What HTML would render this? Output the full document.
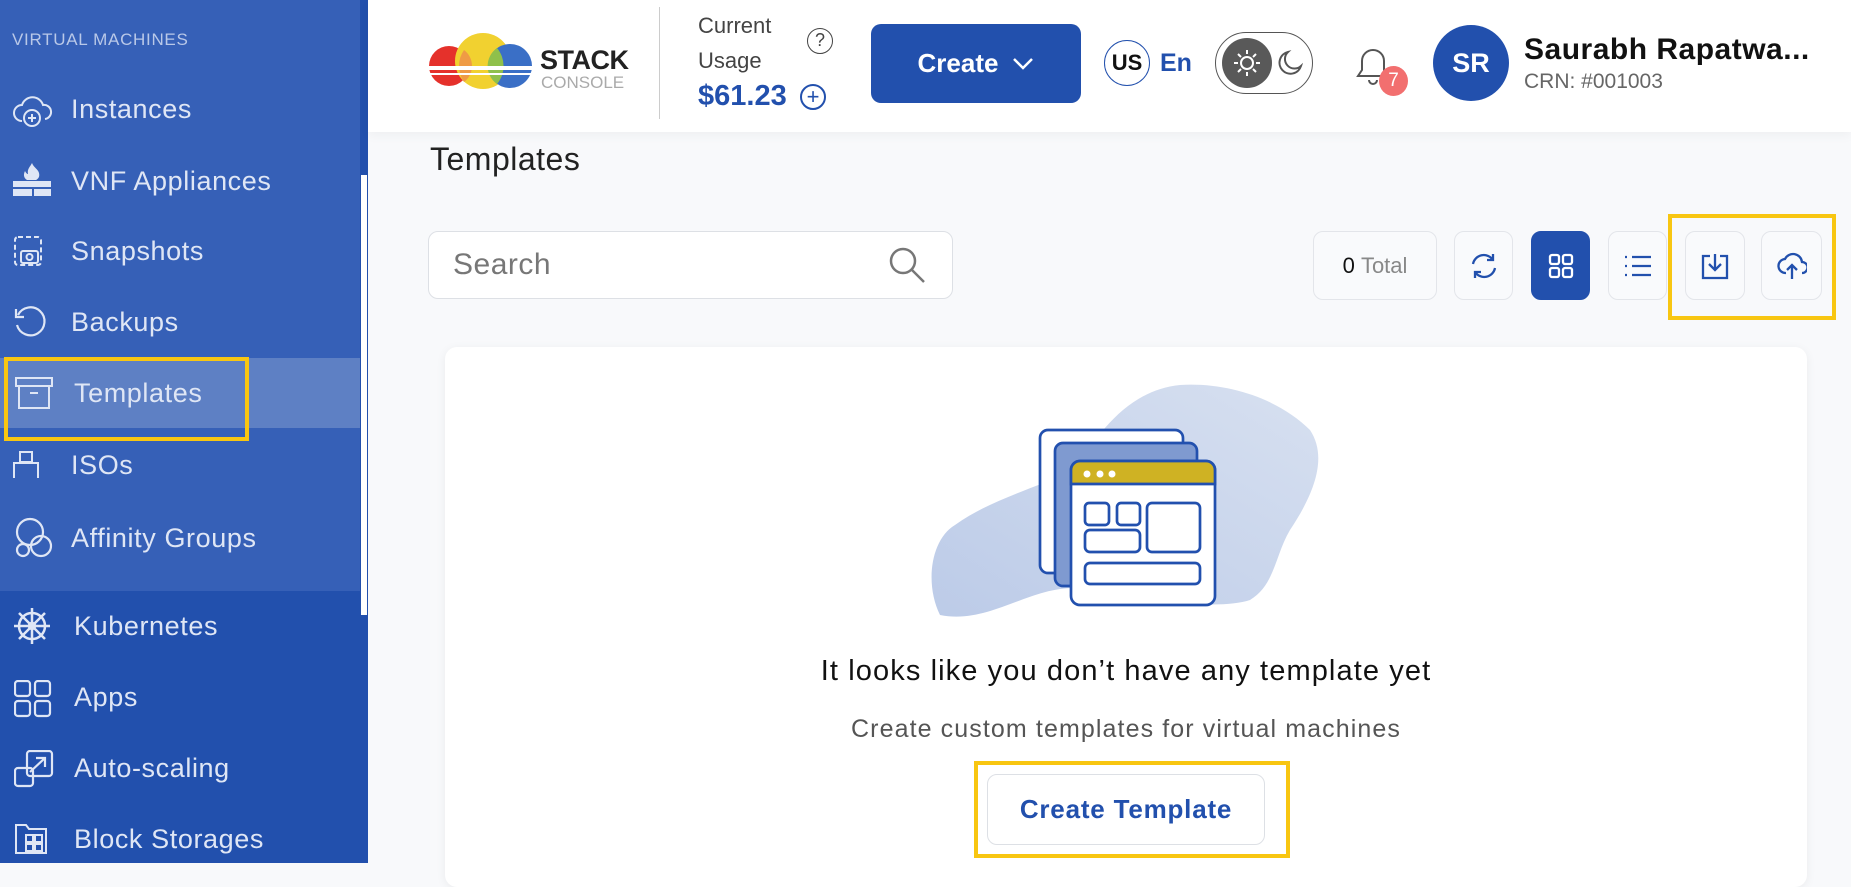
<!DOCTYPE html>
<html><head><meta charset="utf-8"><style>
*{box-sizing:border-box;margin:0;padding:0}
body{width:1851px;height:863px;overflow:hidden;background:#f8f9fb;font-family:"Liberation Sans",sans-serif;position:relative}
.abs{position:absolute}
.sb{left:0;top:0;width:368px;height:863px;background:#2250ad}
.sbl{left:0;top:0;width:360px;height:591px;background:#3660b7}
.item{position:absolute;left:71px;color:#dfe6f5;font-size:27px;letter-spacing:0.6px;line-height:30px}
.ic{position:absolute;left:12px}
.btn{position:absolute;top:231px;height:69px;border:1px solid #e3e5ea;border-radius:10px;background:#f9fafc;display:flex;align-items:center;justify-content:center}
</style></head><body>
<div class="abs sb"></div>
<div class="abs sbl"></div>
<div class="abs" style="left:361px;top:175px;width:6px;height:440px;background:#fff"></div>
<div class="abs" style="left:0;top:358px;width:360px;height:70px;background:#5e80c4"></div>
<div class="abs" style="left:4px;top:357px;width:245px;height:84px;border:4px solid #f8c611"></div>
<div class="abs" style="left:12px;top:30px;color:#b9c8e8;font-size:17px;letter-spacing:0.7px">VIRTUAL MACHINES</div>

<svg class="ic" style="top:91px" width="42" height="40" viewBox="0 0 42 40" fill="none" stroke="#dfe6f5" stroke-width="2"><path d="M10 30a8 8 0 0 1 0-16 11 11 0 0 1 21 0 7 7 0 0 1 2 14"/><circle cx="20" cy="27" r="8"/><path d="M20 23v8M16 27h8"/></svg>
<div class="item" style="top:94px">Instances</div>
<svg class="ic" style="top:162px" width="40" height="38" viewBox="0 0 40 38" fill="#dfe6f5"><path d="M20 1c2 5 6 6 7 10 1 4-1 6-3 7h-9c-3-2-4-5-2-9 1 2 2 3 3 3-1-5 2-7 4-11z"/><rect x="1" y="19" width="38" height="6"/><rect x="1" y="27" width="19" height="7"/><rect x="22" y="27" width="17" height="7"/></svg>
<div class="item" style="top:166px">VNF Appliances</div>
<svg class="ic" style="top:235px" width="32" height="32" viewBox="0 0 32 32" fill="none" stroke="#dfe6f5" stroke-width="2"><rect x="3" y="2" width="26" height="28" rx="3" stroke-dasharray="5 3"/><rect x="9" y="16" width="17" height="12" rx="2"/><circle cx="17.5" cy="22" r="3"/></svg>
<div class="item" style="top:236px">Snapshots</div>
<svg class="ic" style="top:305px" width="36" height="36" viewBox="0 0 36 36" fill="none" stroke="#dfe6f5" stroke-width="2.2"><path d="M6 10a14 14 0 1 1-1 10M4 4v8h8"/></svg>
<div class="item" style="top:307px">Backups</div>
<svg class="ic" style="left:15px;top:376px" width="38" height="34" viewBox="0 0 38 34" fill="none" stroke="#dfe6f5" stroke-width="2"><rect x="1" y="2" width="36" height="8"/><rect x="4" y="10" width="30" height="22"/><path d="M15 17h8"/></svg>
<div class="item" style="left:74px;top:378px">Templates</div>
<svg class="ic" style="top:450px" width="28" height="30" viewBox="0 0 28 30" fill="none" stroke="#dfe6f5" stroke-width="2"><rect x="8" y="2" width="12" height="10"/><path d="M2 28V13h24v15"/></svg>
<div class="item" style="top:450px">ISOs</div>
<svg class="ic" style="top:517px" width="42" height="42" viewBox="0 0 42 42" fill="none" stroke="#dfe6f5" stroke-width="2.2"><circle cx="18" cy="15" r="13"/><circle cx="29" cy="29" r="10"/><circle cx="11" cy="33" r="6"/></svg>
<div class="item" style="top:523px">Affinity Groups</div>
<svg class="ic" style="top:606px" width="40" height="40" viewBox="0 0 40 40" fill="none" stroke="#dfe6f5" stroke-width="2.5"><circle cx="20" cy="20" r="13"/><circle cx="20" cy="20" r="3" fill="#dfe6f5"/><path d="M20 2v36M2 20h36M7 7l26 26M33 7L7 33"/></svg>
<div class="item" style="left:74px;top:611px">Kubernetes</div>
<svg class="ic" style="left:14px;top:680px" width="38" height="38" viewBox="0 0 38 38" fill="none" stroke="#dfe6f5" stroke-width="2.2"><rect x="1" y="1" width="15" height="15" rx="3"/><rect x="21" y="1" width="15" height="15" rx="3"/><rect x="1" y="21" width="15" height="15" rx="3"/><rect x="21" y="21" width="15" height="15" rx="3"/></svg>
<div class="item" style="left:74px;top:682px">Apps</div>
<svg class="ic" style="left:14px;top:750px" width="40" height="38" viewBox="0 0 40 38" fill="none" stroke="#dfe6f5" stroke-width="2.2"><rect x="13" y="1" width="25" height="25" rx="3"/><rect x="1" y="18" width="18" height="18" rx="3"/><path d="M16 22l15-14M22 8h9v9"/></svg>
<div class="item" style="left:74px;top:753px">Auto-scaling</div>
<svg class="ic" style="left:14px;top:823px" width="34" height="32" viewBox="0 0 34 32" fill="none" stroke="#dfe6f5" stroke-width="2"><path d="M2 30V2h10l3 4h17v24z"/><rect x="12" y="12" width="7" height="7"/><rect x="21" y="12" width="7" height="7"/><rect x="12" y="21" width="7" height="7"/><rect x="21" y="21" width="7" height="7"/></svg>
<div class="item" style="left:74px;top:824px">Block Storages</div>

<!-- header -->
<div class="abs" style="left:368px;top:0;width:1483px;height:132px;background:#fff;box-shadow:0 4px 10px rgba(0,0,0,0.04)"></div>
<svg class="abs" style="left:428px;top:33px" width="112" height="60" viewBox="0 0 112 60"><circle cx="21" cy="33" r="20" fill="#e5312b"/><circle cx="55" cy="28" r="28" fill="#f1d130"/><circle cx="82" cy="33" r="22" fill="#3a6fc6"/><path d="M36 17a20 20 0 0 1 0 32a28 28 0 0 1 0-32z" fill="#ef9b45"/><path d="M69 15a22 22 0 0 0 0 36a28 28 0 0 0 0-36z" fill="#8fc04b"/><rect x="0" y="33" width="104" height="4" fill="#fff"/><rect x="0" y="40" width="104" height="2" fill="#fff"/></svg>
<div class="abs" style="left:540px;top:45px;font-size:27px;font-weight:bold;color:#222;letter-spacing:-0.5px">STACK</div>
<div class="abs" style="left:541px;top:73px;font-size:17px;color:#aaa">CONSOLE</div>
<div class="abs" style="left:659px;top:7px;width:1px;height:112px;background:#ccc"></div>
<div class="abs" style="left:698px;top:8px;font-size:22px;color:#444;line-height:35px">Current<br>Usage</div>
<div class="abs" style="left:807px;top:28px;width:26px;height:26px;border:1.5px solid #444;border-radius:50%;font-size:18px;text-align:center;line-height:23px;color:#444">?</div>
<div class="abs" style="left:698px;top:80px;font-size:29px;font-weight:bold;color:#2250ad">$61.23</div>
<div class="abs" style="left:800px;top:84px;width:26px;height:26px;border:2px solid #2250ad;border-radius:50%;color:#2250ad;font-size:22px;text-align:center;line-height:22px">+</div>
<div class="abs" style="left:871px;top:24px;width:210px;height:79px;background:#2250ad;border-radius:10px;color:#fff;font-size:26px;font-weight:bold;display:flex;align-items:center;justify-content:center;gap:14px">Create <svg width="22" height="14" viewBox="0 0 22 14" fill="none" stroke="#fff" stroke-width="2.5"><path d="M2 2l9 9 9-9"/></svg></div>
<div class="abs" style="left:1104px;top:40px;width:46px;height:46px;border:1.5px solid #2250ad;border-radius:50%;font-size:22px;font-weight:bold;text-align:center;line-height:43px;color:#111">US</div>
<div class="abs" style="left:1160px;top:49px;font-size:25px;font-weight:bold;color:#2250ad">En</div>
<div class="abs" style="left:1215px;top:32px;width:98px;height:62px;border:1.5px solid #555;border-radius:31px"></div>
<div class="abs" style="left:1222px;top:38px;width:50px;height:50px;background:#595959;border-radius:50%"></div>
<svg class="abs" style="left:1232px;top:48px" width="30" height="30" viewBox="0 0 30 30" fill="none" stroke="#fff" stroke-width="2"><circle cx="15" cy="15" r="6"/><path d="M15 2v4M15 24v4M2 15h4M24 15h4M6 6l3 3M21 21l3 3M6 24l3-3M21 9l3-3"/></svg>
<svg class="abs" style="left:1276px;top:49px" width="28" height="28" viewBox="0 0 28 28" fill="none" stroke="#555" stroke-width="2"><path d="M12 3a11 11 0 1 0 13 14A9 9 0 0 1 12 3z"/></svg>
<svg class="abs" style="left:1354px;top:44px" width="38" height="44" viewBox="0 0 38 44" fill="none" stroke="#555" stroke-width="2"><path d="M4 32h30l-4-6V17a11 11 0 0 0-22 0v9z"/><path d="M15 36a4 4 0 0 0 8 0"/></svg>
<div class="abs" style="left:1379px;top:66px;width:29px;height:30px;background:#f26f6f;border-radius:50%;color:#fff;font-size:19px;text-align:center;line-height:30px">7</div>
<div class="abs" style="left:1433px;top:25px;width:76px;height:76px;background:#2250ad;border-radius:50%;color:#fff;font-size:27px;font-weight:bold;text-align:center;line-height:76px">SR</div>
<div class="abs" style="left:1524px;top:33px;font-size:30px;font-weight:bold;color:#111;letter-spacing:0.5px">Saurabh Rapatwa...</div>
<div class="abs" style="left:1524px;top:70px;font-size:21px;color:#666">CRN: #001003</div>

<!-- content -->
<div class="abs" style="left:430px;top:141px;font-size:32px;color:#222;letter-spacing:0.5px">Templates</div>
<div class="abs" style="left:428px;top:231px;width:525px;height:68px;background:#fff;border:1px solid #dde0e5;border-radius:10px"></div>
<div class="abs" style="left:453px;top:248px;font-size:30px;color:#777;letter-spacing:0.5px">Search</div>
<svg class="abs" style="left:887px;top:245px" width="40" height="40" viewBox="0 0 40 40" fill="none" stroke="#777" stroke-width="2.5"><circle cx="16" cy="16" r="12"/><path d="M25 25l12 12"/></svg>
<div class="btn" style="left:1313px;width:124px;font-size:22px;color:#888"><b style="color:#111;font-weight:normal">0</b>&nbsp;Total</div>
<div class="btn" style="left:1454px;width:59px"><svg width="30" height="30" viewBox="0 0 30 30" fill="none" stroke="#2250ad" stroke-width="2.3"><path d="M4 13a11 11 0 0 1 20-4M26 17a11 11 0 0 1-20 4M24 3v6h-6M6 27v-6h6"/></svg></div>
<div class="btn" style="left:1531px;width:59px;background:#2250ad;border-color:#2250ad"><svg width="26" height="26" viewBox="0 0 26 26" fill="none" stroke="#fff" stroke-width="2.3"><rect x="2" y="2" width="9" height="9" rx="2"/><rect x="15" y="2" width="9" height="9" rx="2"/><rect x="2" y="15" width="9" height="9" rx="2"/><rect x="15" y="15" width="9" height="9" rx="2"/></svg></div>
<div class="btn" style="left:1608px;width:59px"><svg width="28" height="24" viewBox="0 0 28 24" fill="none" stroke="#2250ad" stroke-width="2.3"><path d="M1 3h2M1 12h2M1 21h2M8 3h19M8 12h19M8 21h19"/></svg></div>
<div class="btn" style="left:1685px;width:60px"><svg width="28" height="28" viewBox="0 0 28 28" fill="none" stroke="#2250ad" stroke-width="2.3"><path d="M9 4H2v22h24V4h-7M14 2v16M8 12l6 6 6-6"/></svg></div>
<div class="btn" style="left:1761px;width:61px"><svg width="30" height="30" viewBox="0 0 30 30" fill="none" stroke="#2250ad" stroke-width="2.3"><path d="M9 22a7 7 0 0 1-1-14 9 9 0 0 1 17 3 5 5 0 0 1 0 11M15 28V14M10 19l5-5 5 5"/></svg></div>
<div class="abs" style="left:1668px;top:214px;width:168px;height:106px;border:4px solid #f8c611"></div>

<div class="abs" style="left:445px;top:347px;width:1362px;height:540px;background:#fff;border-radius:12px;box-shadow:0 2px 10px rgba(0,0,0,0.06)"></div>
<svg class="abs" style="left:900px;top:370px" width="450" height="270" viewBox="0 0 450 270">
<defs><linearGradient id="g" x1="0" y1="1" x2="1" y2="0"><stop offset="0" stop-color="#bccbe8"/><stop offset="1" stop-color="#d7e0f0"/></linearGradient></defs>
<path d="M40 245C25 215 30 170 55 155C90 130 130 120 175 100C200 60 230 20 280 15C330 12 380 30 410 60C430 90 410 130 390 160C375 185 375 215 350 230C320 240 250 232 180 218C130 215 90 255 40 245Z" fill="url(#g)"/>
<g stroke="#2250ae" stroke-width="2.7">
<rect x="140" y="60" width="143" height="143" rx="8" fill="#fff"/>
<rect x="155" y="73" width="142" height="143" rx="8" fill="#7f9ad0"/>
<rect x="171" y="91" width="144" height="144" rx="9" fill="#fff"/>
<path d="M171 114V100a9 9 0 0 1 9-9h126a9 9 0 0 1 9 9v14z" fill="#cfb223"/>
<g fill="none"><rect x="185" y="133" width="24" height="22" rx="4"/><rect x="217" y="133" width="23" height="22" rx="4"/><rect x="247" y="133" width="53" height="49" rx="5"/><rect x="185" y="160" width="55" height="22" rx="5"/><rect x="185" y="193" width="115" height="21" rx="5"/></g>
</g>
<g fill="#fff"><circle cx="187" cy="104" r="3.5"/><circle cx="200" cy="104" r="3.5"/><circle cx="212" cy="104" r="3.5"/></g>
</svg>
<div class="abs" style="left:445px;top:655px;width:1362px;text-align:center;font-size:29px;letter-spacing:1.1px;color:#111">It looks like you don’t have any template yet</div>
<div class="abs" style="left:445px;top:715px;width:1362px;text-align:center;font-size:25px;letter-spacing:1.1px;color:#555">Create custom templates for virtual machines</div>
<div class="abs" style="left:987px;top:774px;width:278px;height:71px;border:1px solid #dde0e5;border-radius:10px;background:#fff;color:#2250ad;font-size:26px;letter-spacing:0.8px;font-weight:bold;text-align:center;line-height:69px">Create Template</div>
<div class="abs" style="left:974px;top:761px;width:316px;height:97px;border:4px solid #f8c611"></div>
</body></html>
